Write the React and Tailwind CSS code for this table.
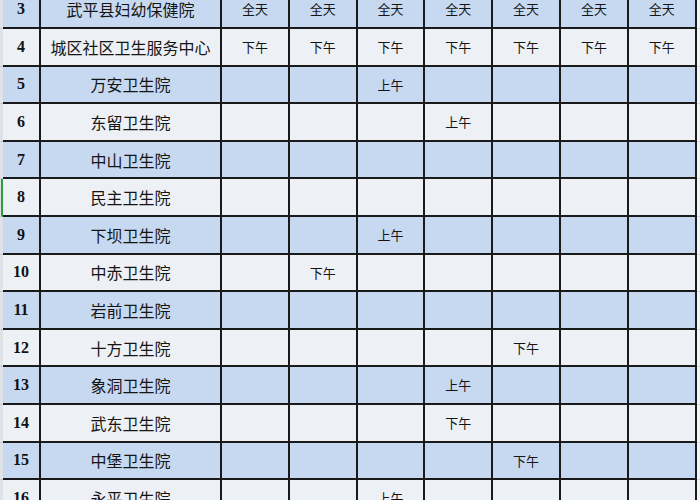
import React from "react";

const rows = [
  { n: "3", name: "武平县妇幼保健院", cells: ["全天", "全天", "全天", "全天", "全天", "全天", "全天"] },
  { n: "4", name: "城区社区卫生服务中心", cells: ["下午", "下午", "下午", "下午", "下午", "下午", "下午"] },
  { n: "5", name: "万安卫生院", cells: ["", "", "上午", "", "", "", ""] },
  { n: "6", name: "东留卫生院", cells: ["", "", "", "上午", "", "", ""] },
  { n: "7", name: "中山卫生院", cells: ["", "", "", "", "", "", ""] },
  { n: "8", name: "民主卫生院", cells: ["", "", "", "", "", "", ""], sel: true },
  { n: "9", name: "下坝卫生院", cells: ["", "", "上午", "", "", "", ""] },
  { n: "10", name: "中赤卫生院", cells: ["", "下午", "", "", "", "", ""] },
  { n: "11", name: "岩前卫生院", cells: ["", "", "", "", "", "", ""] },
  { n: "12", name: "十方卫生院", cells: ["", "", "", "", "下午", "", ""] },
  { n: "13", name: "象洞卫生院", cells: ["", "", "", "上午", "", "", ""] },
  { n: "14", name: "武东卫生院", cells: ["", "", "", "下午", "", "", ""] },
  { n: "15", name: "中堡卫生院", cells: ["", "", "", "", "下午", "", ""] },
  { n: "16", name: "永平卫生院", cells: ["", "", "上午", "", "", "", ""] },
];

export default function App() {
  return (
    <div className="w-[700px] h-[500px] overflow-hidden bg-[#f4f5f7]">
      <div className="-mt-[8.6px] flex flex-col">
        {rows.map((r, i) => {
          const blue = i % 2 === 0;
          const bg = blue ? "bg-[#c6d9f1]" : "bg-[#edf0f4]";
          return (
            <div key={r.n} className="flex h-[37.6px] shrink-0">
              <div
                className={
                  "w-[3px] shrink-0 border-b border-[#c9ccd1] bg-[#dfe2e6] " +
                  (r.sel ? "border-r-2 border-r-[#2e9e3a]" : "")
                }
              />
              <div
                className={
                  "grid grid-cols-[38px_181px_repeat(7,67.8px)] border-b-2 border-[#1a1a1a] " +
                  bg
                }
              >
                <div className="flex items-center justify-center border-r-2 border-[#1a1a1a] font-['Liberation_Serif',serif] font-bold text-[16px] text-[#111]">
                  {r.n}
                </div>
                <div className="flex items-center justify-center border-r-2 border-[#1a1a1a] font-['Noto_Sans_CJK_SC',sans-serif] text-[16px] text-[#151515]">
                  {r.name}
                </div>
                {r.cells.map((c, j) => (
                  <div
                    key={j}
                    className="flex items-center justify-center border-r-2 border-[#1a1a1a] font-['Noto_Sans_CJK_SC',sans-serif] text-[13px] text-[#151515]"
                  >
                    {c}
                  </div>
                ))}
              </div>
              <div className="flex-1 border-b border-[#d3d6da] bg-[#f4f5f7]" />
            </div>
          );
        })}
      </div>
    </div>
  );
}
